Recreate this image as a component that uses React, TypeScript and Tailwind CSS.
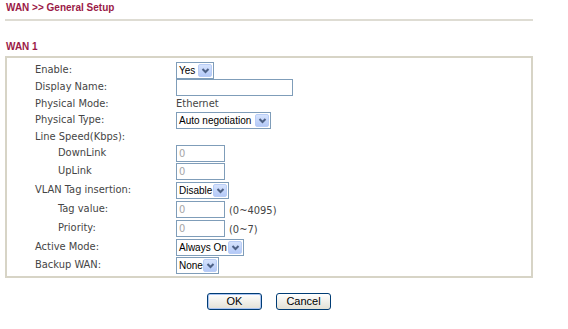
const label = "font-['DejaVu_Sans_Condensed','DejaVu_Sans',sans-serif] text-[11px] text-[#454545]";

function Chevron() {
  return (
    <svg width="9" height="7" viewBox="0 0 9 7">
      <path d="M1.5 2 L4.5 5 L7.5 2" fill="none" stroke="#4d6185" strokeWidth="2" />
    </svg>
  );
}

function Select({ text, width }: { text: string; width: string }) {
  return (
    <div className={`flex h-[17px] items-stretch border border-[#7f9db9] bg-white ${width}`}>
      <span className="min-w-0 flex-1 whitespace-nowrap pl-[2px] font-['Liberation_Sans',Arial,sans-serif] text-[10px] leading-[15px] text-black">
        {text}
      </span>
      <span className="m-px flex w-[14px] shrink-0 items-center justify-center rounded-[2px] border border-[#b9cdf6] bg-gradient-to-b from-[#d6e3fd] to-[#b4c9f7]">
        <Chevron />
      </span>
    </div>
  );
}

function Input({ width, value }: { width: string; value?: string }) {
  return (
    <div className={`h-[17px] border border-[#7f9db9] bg-white pl-[2px] leading-[15px] text-[11px] text-[#a6a6a6] ${width}`}>
      {value}
    </div>
  );
}

interface RowProps {
  text: string;
  height: string;
  indent?: boolean;
  children?: React.ReactNode;
}

function Row({ text, height, indent, children }: RowProps) {
  return (
    <div className={`flex items-center ${height}`}>
      <div className={`w-[141px] shrink-0 whitespace-nowrap ${indent ? 'pl-[23px]' : ''}`}>{text}</div>
      <div className="flex items-center whitespace-nowrap">{children}</div>
    </div>
  );
}

function Button({ text, focused }: { text: string; focused?: boolean }) {
  return (
    <button
      className={`h-[17px] w-[55px] rounded-[3px] border border-[#003c74] bg-gradient-to-b from-white to-[#e3e1d6] font-['Liberation_Sans',Arial,sans-serif] text-[11px] leading-[13px] text-black ${
        focused ? 'shadow-[inset_0_0_0_1px_#a9c4f2]' : ''
      }`}
    >
      {text}
    </button>
  );
}

export default function App() {
  return (
    <div className={`h-[329px] w-[568px] bg-white ${label}`}>
      {/* 헤더 */}
      <div className="pl-[6px] pt-[2px] font-['Liberation_Sans',Arial,sans-serif] text-[10px] font-bold leading-[12px] text-[#9b1a47]">
        WAN &gt;&gt; General Setup
      </div>
      <div className="ml-[5px] mt-[5px] h-[2px] w-[528px] bg-[#dedcd3]" />

      <div className="mt-[20px] pl-[6px] font-['Liberation_Sans',Arial,sans-serif] text-[10px] font-bold leading-[12px] text-[#9b1a47]">
        WAN 1
      </div>

      {/* 설정 박스 */}
      <div className="ml-[5px] mt-[3px] w-[528px] border-2 border-[#d7d4c6] pb-[2px] pl-[28px] pt-[3px]">
        <Row text="Enable:" height="h-[18px]">
          <Select text="Yes" width="w-[38px]" />
        </Row>
        <Row text="Display Name:" height="h-[17px]">
          <Input width="w-[117px]" />
        </Row>
        <Row text="Physical Mode:" height="h-[16px]">
          <span>Ethernet</span>
        </Row>
        <Row text="Physical Type:" height="h-[17px]">
          <Select text="Auto negotiation" width="w-[95px]" />
        </Row>
        <Row text="Line Speed(Kbps):" height="h-[16px]" />
        <Row text="DownLink" indent height="h-[17px]">
          <Input width="w-[49px]" value="0" />
        </Row>
        <Row text="UpLink" indent height="h-[19px]">
          <Input width="w-[49px]" value="0" />
        </Row>
        <Row text="VLAN Tag insertion:" height="h-[19px]">
          <Select text="Disable" width="w-[53px]" />
        </Row>
        <Row text="Tag value:" indent height="h-[19px]">
          <Input width="w-[49px]" value="0" />
          <span className="ml-[4px] mt-[3px]">(0~4095)</span>
        </Row>
        <Row text="Priority:" indent height="h-[19px]">
          <Input width="w-[49px]" value="0" />
          <span className="ml-[4px] mt-[4px]">(0~7)</span>
        </Row>
        <Row text="Active Mode:" height="h-[19px]">
          <Select text="Always On" width="w-[68px]" />
        </Row>
        <Row text="Backup WAN:" height="h-[17px]">
          <Select text="None" width="w-[43px]" />
        </Row>
      </div>

      <div className="ml-[5px] mt-[15px] flex w-[528px] justify-center gap-[14px]">
        <Button text="OK" focused />
        <Button text="Cancel" />
      </div>
    </div>
  );
}
